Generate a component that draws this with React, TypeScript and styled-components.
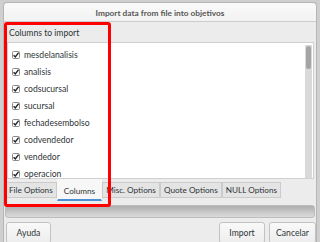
import React from 'react';
import styled, { createGlobalStyle } from 'styled-components';

const GlobalStyle = createGlobalStyle`
  html, body {
    margin: 0;
    padding: 0;
    background: #d4d4d4;
  }
  * { box-sizing: border-box; }
`;

const Screen = styled.div`
  position: relative;
  width: 320px;
  height: 242px;
  overflow: hidden;
  background: #cfcfcf;
  font-family: Lato, 'Open Sans', sans-serif;
  font-size: 8.6px;
  color: #2e3436;
  display: flex;
  padding: 2px 3px 0 3px;
`;

const Dialog = styled.div`
  flex: 1;
  background: #ececec;
  border: 1px solid #b6b6b6;
  border-bottom: none;
  border-radius: 4px 4px 0 0;
  overflow: hidden;
`;

const TitleBar = styled.div`
  height: 19px;
  display: flex;
  align-items: center;
  justify-content: center;
  padding-top: 1px;
  background: linear-gradient(#fafafa, #f2f2f2);
  border-bottom: 1px solid #cdcdcd;
  border-radius: 4px 4px 0 0;
  color: #555753;
  font-size: 8.3px;
  font-weight: 700;
`;

const FrameLabel = styled.div`
  height: 20px;
  display: flex;
  align-items: center;
  padding: 1px 0 0 5px;
  color: #2e3436;
`;

const ListBox = styled.div`
  height: 137px;
  margin: 0 2px 0 3px;
  background: #ffffff;
  border: 1px solid #d0d0d0;
  display: flex;
`;

const Items = styled.div`
  flex: 1;
  padding: 3px 0 0 4px;
  display: flex;
  flex-direction: column;
`;

const Item = styled.div`
  height: 17px;
  flex-shrink: 0;
  display: flex;
  align-items: center;
  gap: 4px;
  color: #2e3436;
`;

const Trough = styled.div`
  width: 7px;
  margin: 2px 1px 0 0;
  background: #d9d9d9;
  padding: 1px 1px;
`;

const Thumb = styled.div`
  height: 23px;
  border-radius: 3px;
  background: #a4a4a4;
`;

const TabStrip = styled.div`
  height: 22px;
  display: flex;
  align-items: flex-end;
  padding-left: 1px;
  font-size: 8.2px;
`;

const Tab = styled.div<{ $active?: boolean }>`
  height: ${p => (p.$active ? '22px' : '16px')};
  margin-bottom: ${p => (p.$active ? '0' : '3px')};
  padding: 0 ${p => (p.$active ? '6px' : '3px')};
  padding-top: ${p => (p.$active ? '2px' : '0')};
  display: flex;
  align-items: center;
  background: ${p => (p.$active ? '#f7f7f7' : '#e4e4e4')};
  border: 1px solid ${p => (p.$active ? '#f7f7f7' : '#cbcbcb')};
  border-bottom: ${p => (p.$active ? '2px solid #4a90d9' : '1px solid #cbcbcb')};
  color: #2e3436;
  white-space: nowrap;
`;

const Progress = styled.div`
  margin: 4px 1px 0 1px;
  height: 13px;
  border-radius: 3px;
  background: linear-gradient(#adadad, #c8c8c8 55%, #dadada);
  border: 1px solid #bdbdbd;
`;

const ButtonRow = styled.div`
  margin-top: 4px;
  padding-left: 2px;
  display: flex;
  gap: 4px;
`;

const Spacer = styled.div`
  flex: 1;
`;

const Button = styled.div<{ $w: number }>`
  width: ${p => p.$w}px;
  height: 22px;
  display: flex;
  align-items: center;
  justify-content: center;
  border: 1px solid #c2c2c2;
  border-radius: 3px;
  background: linear-gradient(#f9f9f9, #ededed);
  color: #2e3436;
`;

const Highlight = styled.div`
  position: absolute;
  left: 4px;
  top: 22px;
  width: 107px;
  height: 185px;
  border: 3px solid #ff0000;
  border-radius: 3px;
  pointer-events: none;
`;

const Check = () => (
  <svg width="8" height="8" viewBox="0 0 8 8">
    <rect x="0.5" y="0.5" width="7" height="7" rx="1" fill="#fff" stroke="#8a8a8a" />
    <path d="M1.6 4.2 L3.3 5.9 L6.6 1.6" fill="none" stroke="#222" strokeWidth="1.4" />
  </svg>
);

const columns = [
  'mesdelanalisis',
  'analisis',
  'codsucursal',
  'sucursal',
  'fechadesembolso',
  'codvendedor',
  'vendedor',
  'operacion',
];

const tabs = ['File Options', 'Columns', 'Misc. Options', 'Quote Options', 'NULL Options'];

export default function App() {
  return (
    <Screen>
      <GlobalStyle />
      <Dialog>
        <TitleBar>Import data from file into objetivos</TitleBar>
        <FrameLabel>Columns to import</FrameLabel>
        <ListBox>
          <Items>
            {columns.map(c => (
              <Item key={c}>
                <Check />
                {c}
              </Item>
            ))}
          </Items>
          <Trough>
            <Thumb />
          </Trough>
        </ListBox>
        <TabStrip>
          {tabs.map(t => (
            <Tab key={t} $active={t === 'Columns'}>
              {t}
            </Tab>
          ))}
        </TabStrip>
        <Progress />
        <ButtonRow>
          <Button $w={45}>Ayuda</Button>
          <Spacer />
          <Button $w={46}>Import</Button>
          <Button $w={47}>Cancelar</Button>
        </ButtonRow>
      </Dialog>
      <Highlight />
    </Screen>
  );
}
